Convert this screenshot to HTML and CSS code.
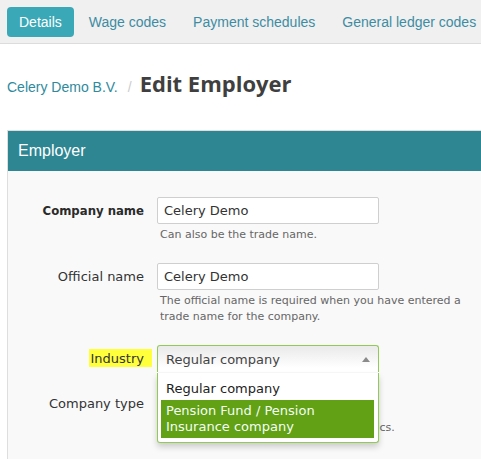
FILE: index.html
```html
<!DOCTYPE html>
<html>
<head>
<meta charset="utf-8">
<link rel="stylesheet" href="styles.css">
</head>
<body>
<nav class="tabs">
  <a class="tab active">Details</a>
  <a class="tab">Wage codes</a>
  <a class="tab">Payment schedules</a>
  <a class="tab">General ledger codes</a>
</nav>
<div class="crumbs">
  <a class="crumb">Celery Demo B.V.</a>
  <span class="sep">/</span>
  <h1 class="title">Edit Employer</h1>
</div>
<section class="panel">
  <header class="panel-head">Employer</header>
  <div class="panel-body">
    <div class="row">
      <label class="label strong">Company name</label>
      <div class="field">
        <div class="input">Celery Demo</div>
        <p class="help">Can also be the trade name.</p>
      </div>
    </div>
    <div class="row">
      <label class="label">Official name</label>
      <div class="field">
        <div class="input">Celery Demo</div>
        <p class="help">The official name is required when you have entered a trade name for the company.</p>
      </div>
    </div>
    <div class="row row-select">
      <label class="label"><span class="mark">Industry</span></label>
      <div class="field">
        <div class="select open">
          <span class="select-value">Regular company</span>
          <span class="arrow"></span>
          <ul class="menu">
            <li class="option">Regular company</li>
            <li class="option hl">Pension Fund / Pension Insurance company</li>
          </ul>
        </div>
      </div>
    </div>
    <div class="row">
      <label class="label">Company type</label>
      <div class="field">
        <div class="input"></div>
        <p class="help nowrap tight">Used for the reporting of the CBS statistics.</p>
      </div>
    </div>
  </div>
</section>
</body>
</html>
```
FILE: styles.css
```css
* { box-sizing: border-box; }
html, body { margin: 0; padding: 0; background: #fff; }
body {
  font-family: "DejaVu Sans", Verdana, sans-serif;
  font-size: 13px;
  color: #333;
  overflow: hidden;
}

.tabs {
  display: flex;
  gap: 3px;
  padding: 7px 7px 6px;
  background: #f0f0f0;
  border-bottom: 1px solid #dcdcdc;
}
.tab {
  display: block;
  height: 30px;
  line-height: 30px;
  padding: 0 12px;
  font-family: "Liberation Sans", Arial, sans-serif;
  font-size: 14px;
  color: #3d8ca3;
  white-space: nowrap;
  border-radius: 4px;
}
.tab.active {
  background: #3aa8b6;
  color: #fff;
}

.crumbs {
  display: flex;
  align-items: baseline;
  padding: 24px 7px 0;
  height: 54px;
}
.crumb {
  font-family: "Liberation Sans", Arial, sans-serif;
  font-size: 14px;
  color: #2f8a9d;
}
.sep {
  font-family: "Liberation Sans", Arial, sans-serif;
  font-size: 14px;
  color: #ccc;
  margin: 0 8px 0 10px;
}
.title {
  margin: 0;
  font-family: "Open Sans", sans-serif;
  font-weight: 700;
  font-size: 22px;
  line-height: 30px;
  color: #3f3f3f;
}

.panel {
  margin: 32px -10px 0 7px;
  border: 1px solid #dedede;
  background: #f9f9f9;
}
.panel-head {
  height: 40px;
  line-height: 40px;
  padding-left: 10px;
  background: #2e8693;
  color: #fff;
  font-family: "Liberation Sans", Arial, sans-serif;
  font-size: 16px;
}
.panel-body {
  padding: 26px 0 20px 0;
}

.row {
  display: grid;
  grid-template-columns: 136px 222px;
  column-gap: 13px;
  margin-bottom: 20px;
}
.row-select { margin-bottom: 18px; }
.label {
  text-align: right;
  line-height: 27px;
  color: #333;
  white-space: nowrap;
}
.label.strong {
  font-family: "DejaVu Sans Condensed", "DejaVu Sans", sans-serif;
  font-weight: 700;
  color: #2a2a2a;
}
.mark {
  background: #ffff3c;
  padding: 2px 8px 1px 2px;
  margin-right: -8px;
}
.field { position: relative; }
.input {
  height: 27px;
  line-height: 25px;
  padding: 0 6px;
  background: #fff;
  border: 1px solid #cfcfcf;
  border-radius: 2px;
  color: #333;
}
.help {
  margin: 3px 0 0 3px;
  width: 310px;
  font-size: 11px;
  line-height: 16px;
  color: #666;
}
.nowrap { white-space: nowrap; }
.tight { word-spacing: -0.6px; }

.select {
  position: relative;
  height: 27px;
  line-height: 27px;
  padding: 0 8px;
  border: 1px solid #93c957;
  border-bottom: none;
  border-radius: 3px 3px 0 0;
  background: linear-gradient(#ececec 10%, #fff 85%);
  color: #444;
  z-index: 2;
}
.arrow {
  position: absolute;
  right: 8px;
  top: 11px;
  width: 0;
  height: 0;
  border-left: 4px solid transparent;
  border-right: 4px solid transparent;
  border-bottom: 5px solid #8a8a8a;
}
.menu {
  position: absolute;
  top: 27px;
  left: -1px;
  right: -1px;
  margin: 0;
  padding: 5px 4px 4px 3px;
  list-style: none;
  background: #fff;
  border: 1px solid #93c957;
  border-top: none;
  border-radius: 0 0 3px 3px;
  box-shadow: 0 4px 6px rgba(0, 0, 0, 0.18);
}
.option {
  padding: 3px 5px;
  line-height: 16px;
  color: #222;
}
.option.hl {
  background: #62a016;
  color: #f2fff2;
}
```
